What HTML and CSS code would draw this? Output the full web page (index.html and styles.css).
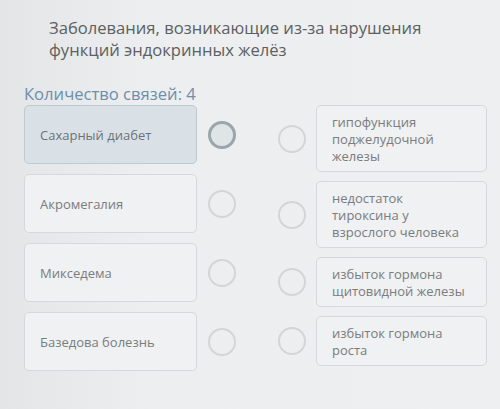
FILE: index.html
```html
<!DOCTYPE html>
<html lang="ru">
<head>
    <meta charset="UTF-8">
    <meta name="viewport" content="width=device-width, initial-scale=1.0">
    <title>Соотнесите</title>
    <link rel="stylesheet" href="styles.css">
</head>
<body>
    <div class="page">
        <h2 class="question">Заболевания, возникающие из-за нарушения функций эндокринных желёз</h2>
        <div class="count">Количество связей: 4</div>

        <div class="match">
            <div class="col col-left">
                <div class="item">
                    <div class="card selected">Сахарный диабет</div>
                    <span class="dot dot-active"></span>
                </div>
                <div class="item">
                    <div class="card">Акромегалия</div>
                    <span class="dot"></span>
                </div>
                <div class="item">
                    <div class="card">Микседема</div>
                    <span class="dot"></span>
                </div>
                <div class="item">
                    <div class="card">Базедова болезнь</div>
                    <span class="dot"></span>
                </div>
            </div>

            <div class="col col-right">
                <div class="item">
                    <span class="dot"></span>
                    <div class="card card-text">гипофункция поджелудочной железы</div>
                </div>
                <div class="item">
                    <span class="dot"></span>
                    <div class="card card-text">недостаток тироксина у взрослого человека</div>
                </div>
                <div class="item">
                    <span class="dot"></span>
                    <div class="card card-text">избыток гормона щитовидной железы</div>
                </div>
                <div class="item">
                    <span class="dot"></span>
                    <div class="card card-text">избыток гормона роста</div>
                </div>
            </div>
        </div>
    </div>
</body>
</html>
```

FILE: styles.css
```css
body { margin: 0; background: linear-gradient(90deg, #e3e5e6 0%, #eceeef 30%, #edeff0 100%); font-family: "Open Sans", "Noto Sans", sans-serif; }
.page { padding: 17px 0 0 24px; height: 392px; }

.question { margin: 0 0 23px 25px; width: 400px; font-size: 16.6px; font-weight: normal; line-height: 22px; color: #5d5f61; }
.count { font-size: 16.6px; line-height: 20px; color: #6c8ead; margin-bottom: 1px; }

.match { display: flex; gap: 42px; }
.col { display: flex; flex-direction: column; }
.col-left { gap: 10px; }
.col-right { gap: 9px; }
.item { display: flex; align-items: center; }
.col-left .item { gap: 11px; }
.col-right .item { gap: 10px; }

.card { box-sizing: border-box; border: 1px solid #d6d9db; border-radius: 5px; background: #eff1f2; color: #7a7c7e; font-size: 13px; }
.col-left .card { width: 173px; height: 59px; padding: 0 15px; display: flex; align-items: center; }
.card.selected { background: #d9e1e6; border-color: #bfc9cf; color: #6e7276; }
.card-text { width: 171px; padding: 8px 15px 6px; line-height: 17px; }

.dot { box-sizing: border-box; width: 28px; height: 28px; border-radius: 50%; border: 2px solid #d3d5d6; flex-shrink: 0; }
.dot-active { border: 3px solid #9aa6ab; background: #dfe5e7; }
```
